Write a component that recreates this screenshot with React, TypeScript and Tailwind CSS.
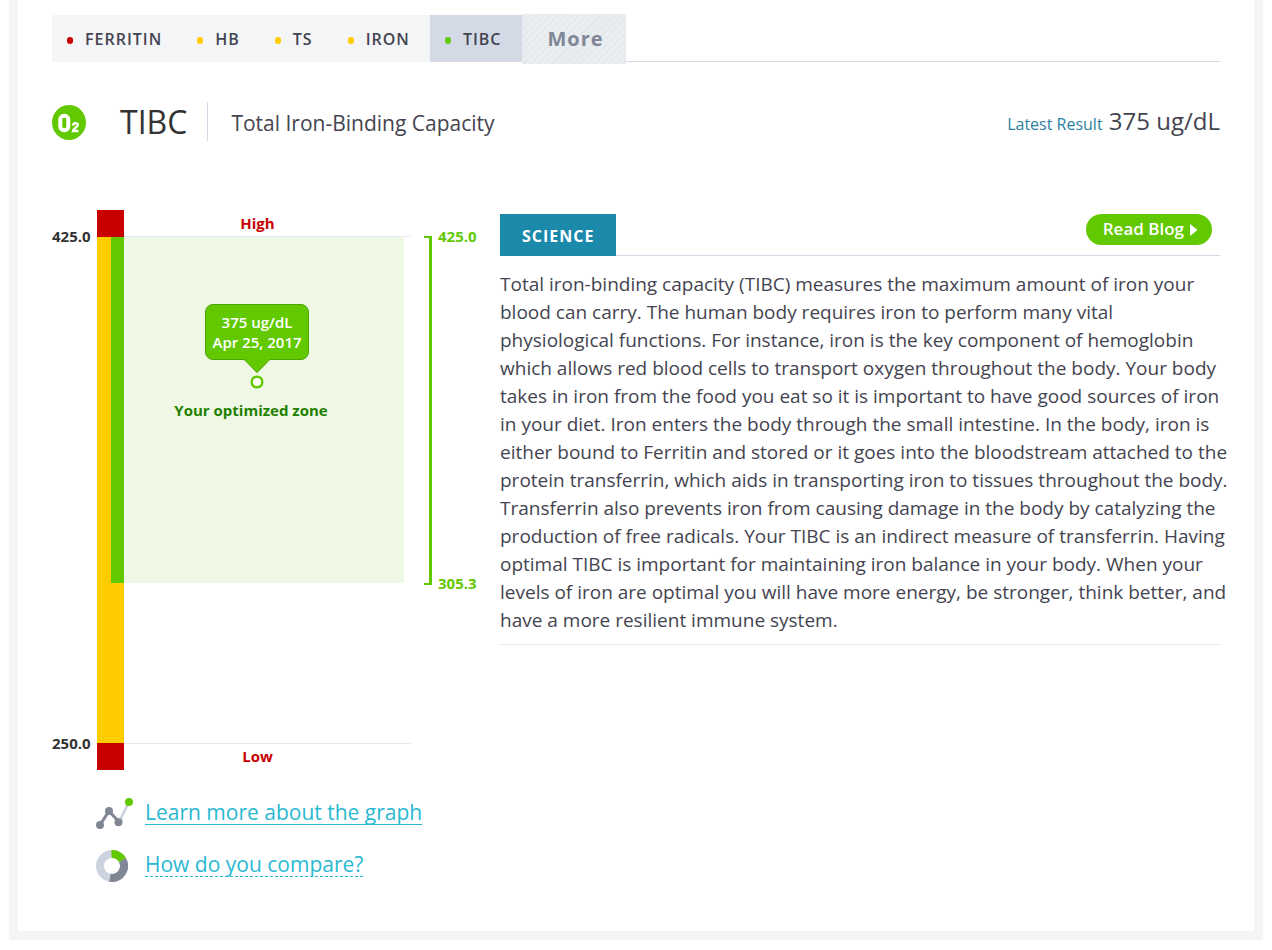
const tabs = [
  { name: "FERRITIN", dot: "bg-[#c80000]" },
  { name: "HB", dot: "bg-[#ffcc00]" },
  { name: "TS", dot: "bg-[#ffcc00]" },
  { name: "IRON", dot: "bg-[#ffcc00]" },
  { name: "TIBC", dot: "bg-[#62c900]", active: true },
];

const Tabs = () => {
  return (
    <nav className="flex h-[50px] items-start bg-[linear-gradient(#d3dae6,#d3dae6)] bg-[length:100%_1px] bg-[position:0_47px] bg-no-repeat">
      <div className="mt-px flex h-[47px]">
        {tabs.map((tab) => (
          <button
            key={tab.name}
            className={`flex items-center pl-[15px] pr-5 text-base font-semibold tracking-[1px] text-[#444450] ${
              tab.active ? "bg-[#d3dae6]" : "bg-[#f3f5f7]"
            }`}
          >
            <span className={`mr-3 mt-[3px] h-[7px] w-[6px] rounded-full ${tab.dot}`}></span>
            {tab.name}
          </button>
        ))}
      </div>
      <button className="h-[50px] bg-[repeating-linear-gradient(135deg,#e5eaec_0px,#e5eaec_3px,#ebeff1_3px,#ebeff1_5px)] pr-[22px] pl-[26px] text-xl font-bold tracking-[1px] text-[#7f8695]">
        More
      </button>
    </nav>
  );
};

const Header = () => {
  return (
    <header className="mt-[38px] flex h-[39px] items-center">
      <svg viewBox="0 0 34 35" className="mt-px mr-[34px] h-[35px] w-[34px]" aria-label="Oxygen">
        <ellipse cx="17" cy="17.5" rx="17" ry="17.5" fill="#62c900" />
        <rect x="8.300" y="10.700" width="8" height="14.600" rx="3.800" fill="none" stroke="#fff" strokeWidth="4" />
        <path
          d="M21 20.600c.2-3 4.800-3.200 4.800-.6 0 2-4.400 3.400-4.800 6h5.600"
          fill="none"
          stroke="#fff"
          strokeWidth="2.400"
        />
      </svg>
      <h1 className="flex h-full items-center border-r border-[#d3dae6] pr-5 text-[32px] text-[#333]">TIBC</h1>
      <h2 className="pt-1 pl-[23px] text-[21px] text-[#444450]">Total Iron-Binding Capacity</h2>
      <p className="ml-auto pb-[2px] text-2xl text-[#444450]">
        <span className="text-base text-[#2b7fa3]">Latest Result</span> 375 ug/dL
      </p>
    </header>
  );
};

const Chart = () => {
  return (
    <div className="flex h-[560px] text-[15px] leading-5 font-bold">
      {/* Scale */}
      <div className="flex w-[45px] flex-col justify-between pt-4 pb-[17px] text-[#333]">
        <span>425.0</span>
        <span>250.0</span>
      </div>

      {/* Range bar */}
      <div className="flex w-[27px] flex-col">
        <div className="h-[27px] bg-[#c80000]"></div>
        <div className="flex-1 bg-[#ffcc00] pl-[14px]">
          <div className="h-[346px] bg-[#62c900]"></div>
        </div>
        <div className="h-[27px] bg-[#c80000]"></div>
      </div>

      {/* Plot */}
      <div className="flex w-[287px] flex-col">
        <div className="flex h-[27px] items-center justify-center border-b border-[#e6eaf0] pr-5 text-[#c80000]">
          High
        </div>
        <div className="mr-[7px] flex h-[346px] flex-col items-center bg-[#eff8e4] pt-[67px] pr-[14px]">
          <div className="rounded-lg border border-[#4da300] bg-[#62c900] px-[6px] py-[7px] text-center font-semibold text-white">
            375 ug/dL
            <br />
            Apr 25, 2017
          </div>
          <svg viewBox="0 0 28 30" className="relative -mt-px h-[30px] w-7">
            <path d="M1 0L14 14L27 0Z" fill="#62c900" />
            <path d="M0 .5h1L14 13.500L27 .5h1" fill="none" stroke="#4da300" />
            <circle cx="14" cy="23" r="5.300" fill="#fff" stroke="#62c900" strokeWidth="2.500" />
          </svg>
          <p className="mt-[11px] mr-3 text-[#1f8000]">Your optimized zone</p>
        </div>
        <div className="mt-auto flex h-[27px] items-start justify-center border-t border-[#e6eaf0] pt-[2px] pr-5 text-[#c80000]">
          Low
        </div>
      </div>

      {/* Optimized range */}
      <div className="mt-4 ml-[13px] flex h-[367px] gap-[6px] text-[#62c900]">
        <div className="mt-[10px] mb-2 w-2 border-y-2 border-r-3 border-[#62c900]"></div>
        <div className="flex flex-col justify-between">
          <span>425.0</span>
          <span>305.3</span>
        </div>
      </div>
    </div>
  );
};

const Links = () => {
  return (
    <div className="mt-6 ml-11 flex flex-col gap-4 text-[21px] text-[#29b9d1]">
      <div className="flex items-center gap-3">
        <svg viewBox="0 -2 37 36" className="h-9 w-[37px]">
          <path d="M23 26L33 6" stroke="#d0d6e1" strokeWidth="3" />
          <path d="M4 29L13 15L23 26" fill="none" stroke="#808794" strokeWidth="3" />
          <g fill="#808794">
            <circle cx="4" cy="29" r="4" />
            <circle cx="13" cy="15" r="4" />
            <circle cx="22.500" cy="26.300" r="4" />
          </g>
          <circle cx="33" cy="6" r="4" fill="#62c900" />
        </svg>
        <a href="#graph" className="border-b border-[#29b9d1] leading-6">
          Learn more about the graph
        </a>
      </div>
      <div className="flex items-center gap-[17px]">
        <svg viewBox="0 0 32 32" className="mt-1 h-8 w-8" fill="none" strokeWidth="8">
          <circle cx="16" cy="16" r="12" stroke="#ccd3df" />
          <path d="M26.400 10A12 12 0 0 1 14 27.800" stroke="#808794" />
          <path d="M15.500 4A12 12 0 0 1 26.400 10" stroke="#62c900" />
        </svg>
        <a href="#compare" className="border-b border-dashed border-[#29b9d1] leading-6">
          How do you compare?
        </a>
      </div>
    </div>
  );
};

const Science = () => {
  return (
    <section className="mt-1 min-w-0 flex-1">
      <div className="flex items-start justify-between border-b border-[#d3dae6]">
        <h3 className="-mb-px bg-[#1b89aa] px-[22px] pt-[10px] pb-2 text-base font-bold tracking-[1px] text-white">
          SCIENCE
        </h3>
        <button className="mr-2 flex h-[31px] items-center gap-[6px] rounded-full bg-[#62c900] pr-[14px] pb-[2px] pl-[17px] text-[17px] font-semibold text-white">
          Read Blog
          <svg viewBox="0 0 8 12" className="mt-[2px] h-3 w-2" fill="#fff">
            <path d="M0 0L7.500 6L0 12Z" />
          </svg>
        </button>
      </div>
      <div className="border-b border-[#e6eaf0] pt-[14px] pb-[10px] text-[19px] leading-7 text-[#444450]">
        <p className="-mr-[10px]">
          Total iron-binding capacity (TIBC) measures the maximum amount of iron your blood can carry. The human body
          requires iron to perform many vital physiological functions. For instance, iron is the key component of
          hemoglobin which allows red blood cells to transport oxygen throughout the body. Your body takes in iron
          from the food you eat so it is important to have good sources of iron in your diet. Iron enters the body
          through the small intestine. In the body, iron is either bound to Ferritin and stored or it goes into the
          bloodstream attached to the protein transferrin, which aids in transporting iron to tissues throughout the
          body. Transferrin also prevents iron from causing damage in the body by catalyzing the production of free
          radicals. Your TIBC is an indirect measure of transferrin. Having optimal TIBC is important for maintaining
          iron balance in your body. When your levels of iron are optimal you will have more energy, be stronger,
          think better, and have a more resilient immune system.
        </p>
      </div>
    </section>
  );
};

const App = () => {
  return (
    <main className="mx-[9px] mb-[10px] border-[9px] border-t-0 border-[#f3f5f7] bg-white px-[34px] pt-[14px] pb-[49px] font-['Open_Sans',sans-serif]">
      <Tabs />
      <Header />
      <div className="mt-[69px] flex">
        <div className="w-[448px] shrink-0">
          <Chart />
          <Links />
        </div>
        <Science />
      </div>
    </main>
  );
};

export default App;
